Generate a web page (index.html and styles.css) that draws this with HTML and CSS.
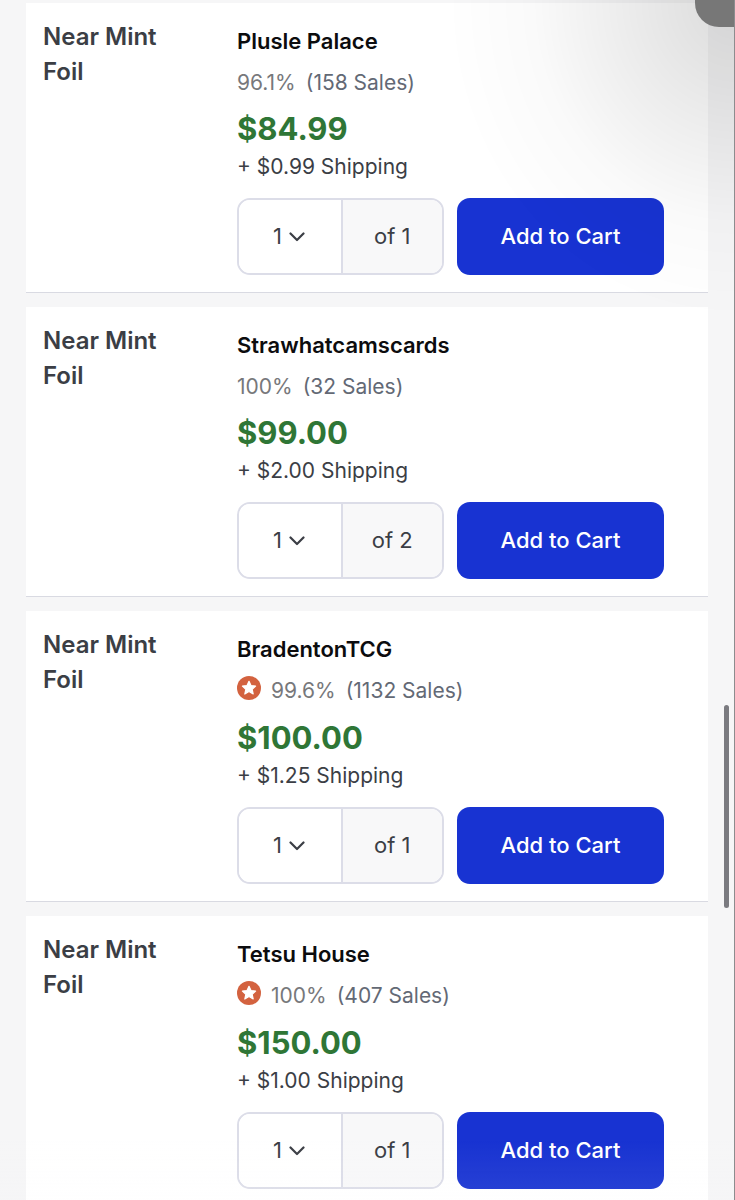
FILE: index.html
```
<!DOCTYPE html>
<html lang="en">
    <head>
        <meta charset="utf-8">
        <meta name="viewport" content="width=device-width, initial-scale=1">
        <title>Listings</title>
        <link rel="stylesheet" href="styles.css">
    </head>
    <body>
        <svg class="symbols" aria-hidden="true">
            <symbol id="chevron" viewBox="0 0 16 10">
                <path d="M1.5 1.5 L8 8 L14.500 1.5" fill="none" stroke="currentColor" stroke-width="2.200" stroke-linecap="round" stroke-linejoin="round"/>
            </symbol>
            <symbol id="star" viewBox="0 0 24 24">
                <circle cx="12" cy="12" r="12" fill="#d3623f"/>
                <path d="M12 5.300 L14 9.600 L18.600 10.100 L15.200 13.300 L16.200 18 L12 15.600 L7.800 18 L8.800 13.300 L5.400 10.100 L10 9.600 Z" fill="#fff" stroke="#fff" stroke-width="1.200" stroke-linejoin="round"/>
            </symbol>
        </svg>

        <main class="listings">
            <section class="listing">
                <h2 class="condition">Near Mint Foil</h2>
                <div class="offer">
                    <a class="seller" href="#">Plusle Palace</a>
                    <div class="rating"><span>96.1%</span> <span class="sales">(158 Sales)</span></div>
                    <div class="price">$84.99</div>
                    <div class="shipping">+ $0.99 Shipping</div>
                    <div class="buy">
                        <div class="quantity">
                            <div class="picker">
                                <select aria-label="Quantity from Plusle Palace"><option>1</option></select>
                                <svg class="chevron"><use href="#chevron"/></svg>
                            </div>
                            <span class="stock">of 1</span>
                        </div>
                        <button class="add" type="button">Add to Cart</button>
                    </div>
                </div>
            </section>

            <section class="listing">
                <h2 class="condition">Near Mint Foil</h2>
                <div class="offer">
                    <a class="seller" href="#">Strawhatcamscards</a>
                    <div class="rating"><span>100%</span> <span class="sales">(32 Sales)</span></div>
                    <div class="price">$99.00</div>
                    <div class="shipping">+ $2.00 Shipping</div>
                    <div class="buy">
                        <div class="quantity">
                            <div class="picker">
                                <select aria-label="Quantity from Strawhatcamscards"><option>1</option><option>2</option></select>
                                <svg class="chevron"><use href="#chevron"/></svg>
                            </div>
                            <span class="stock">of 2</span>
                        </div>
                        <button class="add" type="button">Add to Cart</button>
                    </div>
                </div>
            </section>

            <section class="listing">
                <h2 class="condition">Near Mint Foil</h2>
                <div class="offer">
                    <a class="seller" href="#">BradentonTCG</a>
                    <div class="rating certified"><svg class="star"><use href="#star"/></svg><span>99.6%</span> <span class="sales">(1132 Sales)</span></div>
                    <div class="price">$100.00</div>
                    <div class="shipping">+ $1.25 Shipping</div>
                    <div class="buy">
                        <div class="quantity">
                            <div class="picker">
                                <select aria-label="Quantity from BradentonTCG"><option>1</option></select>
                                <svg class="chevron"><use href="#chevron"/></svg>
                            </div>
                            <span class="stock">of 1</span>
                        </div>
                        <button class="add" type="button">Add to Cart</button>
                    </div>
                </div>
            </section>

            <section class="listing">
                <h2 class="condition">Near Mint Foil</h2>
                <div class="offer">
                    <a class="seller" href="#">Tetsu House</a>
                    <div class="rating certified"><svg class="star"><use href="#star"/></svg><span>100%</span> <span class="sales">(407 Sales)</span></div>
                    <div class="price">$150.00</div>
                    <div class="shipping">+ $1.00 Shipping</div>
                    <div class="buy">
                        <div class="quantity">
                            <div class="picker">
                                <select aria-label="Quantity from Tetsu House"><option>1</option></select>
                                <svg class="chevron"><use href="#chevron"/></svg>
                            </div>
                            <span class="stock">of 1</span>
                        </div>
                        <button class="add" type="button">Add to Cart</button>
                    </div>
                </div>
            </section>
        </main>

        <div class="shade"></div>
        <div class="corner"></div>
        <div class="thumb"></div>
        <div class="edge"></div>
        <div class="fade"></div>
    </body>
</html>
```

FILE: styles.css
```
* {
    box-sizing: border-box;
}

body {
    margin: 0;
    background: #f6f6f7;
    color: #3b3e45;
    font-family: Inter, "Liberation Sans", sans-serif;
    font-size: 21px;
    overflow-x: hidden;
}

body::-webkit-scrollbar {
    display: none;
}

.symbols {
    display: none;
}

.listings {
    display: flex;
    flex-direction: column;
    gap: 14px;
    padding: 3px 27px 14px 26px;
}

.listing {
    display: flex;
    padding: 16px 44px 17px 17px;
    background: #fff;
    border-bottom: 1px solid #d9dae2;
}

.condition {
    width: 130px;
    margin: 0 64px 0 0;
    font-size: 24px;
    line-height: 35px;
    font-weight: 600;
}

.offer {
    flex: 1;
    padding-top: 7px;
}

.seller {
    display: block;
    color: #0c0c0e;
    font-size: 22px;
    line-height: 31px;
    font-weight: 600;
    text-decoration: none;
}

.rating {
    display: flex;
    align-items: center;
    gap: 10px;
    height: 50px;
    color: #77787b;
}

.certified {
    height: 51px;
}

.sales {
    color: #636975;
}

.star {
    width: 24px;
    height: 24px;
    margin-bottom: 6px;
}

.price {
    color: #2f7636;
    font-size: 31px;
    line-height: 44px;
    font-weight: 700;
}

.shipping {
    line-height: 32px;
}

.buy {
    display: grid;
    grid-template-columns: 1fr 1fr;
    gap: 13px;
    margin-top: 15px;
    height: 77px;
}

.quantity {
    display: flex;
    font-size: 22px;
    line-height: 30px;
    border: 2px solid #dcdde8;
    border-radius: 13px;
    overflow: hidden;
}

.picker {
    position: relative;
    width: 50%;
}

.picker select {
    width: 100%;
    height: 100%;
    padding: 0 0 2px 34px;
    appearance: none;
    border: none;
    background: #fff;
    color: inherit;
    font: inherit;
}

.chevron {
    position: absolute;
    top: 32px;
    right: 36px;
    width: 16px;
    height: 10px;
    pointer-events: none;
}

.stock {
    display: flex;
    width: 50%;
    align-items: center;
    justify-content: center;
    padding-bottom: 2px;
    background: #f8f8f9;
    border-left: 2px solid #dcdde8;
}

.add {
    padding: 0 0 2px;
    border: none;
    border-radius: 13px;
    background: #1833d2;
    color: #fff;
    font: inherit;
    font-size: 22px;
    font-weight: 500;
}

/* browser chrome floating over the page */
.shade, .corner, .thumb, .edge, .fade {
    position: fixed;
    pointer-events: none;
}

.shade {
    top: 0;
    right: 0;
    width: 290px;
    height: 320px;
    background: radial-gradient(ellipse farthest-side at 100% 0, rgba(0, 0, 0, 0.14), rgba(0, 0, 0, 0.07) 40%, rgba(0, 0, 0, 0.02) 70%, rgba(0, 0, 0, 0));
}

.corner {
    top: 0;
    right: 0;
    width: 40px;
    height: 27px;
    border-radius: 0 0 0 24px;
    background: #777;
}

.thumb {
    top: 705px;
    right: 6px;
    width: 5px;
    height: 203px;
    border-radius: 3px;
    background: #7b7b80;
}

.edge {
    top: 0;
    right: 0;
    bottom: 0;
    width: 1px;
    background: #8c8c8e;
}

.fade {
    left: 0;
    right: 1px;
    bottom: 0;
    height: 60px;
    background: linear-gradient(rgba(250, 250, 252, 0), rgba(250, 250, 252, 0.08));
}
```
